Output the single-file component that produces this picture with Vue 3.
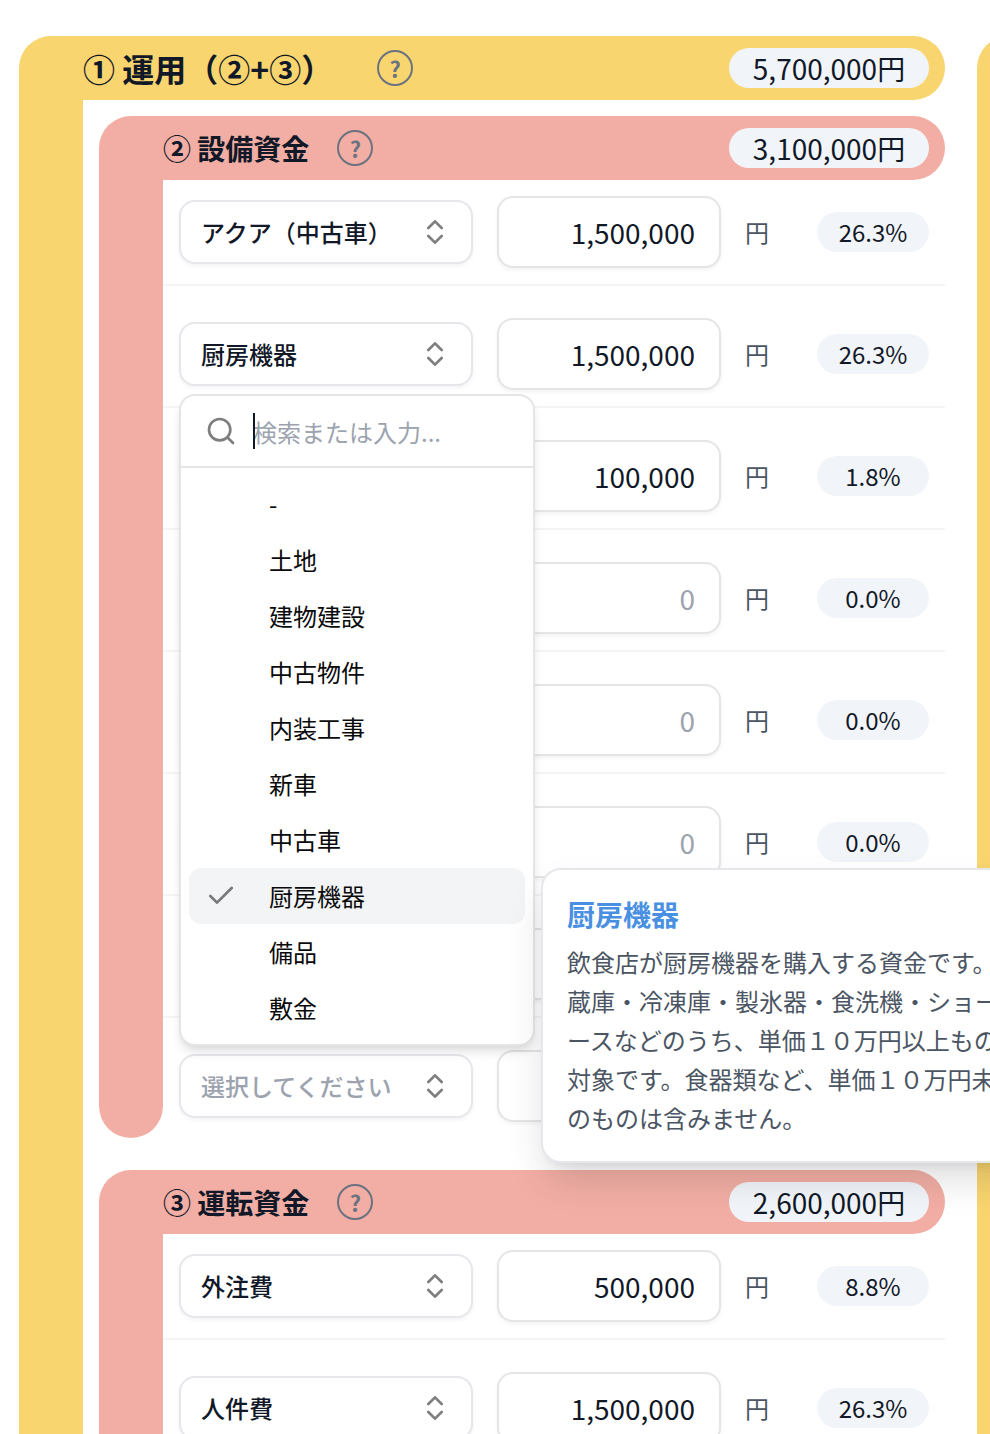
<script setup>
import { reactive, ref } from "vue";

const options = ["-", "土地", "建物建設", "中古物件", "内装工事", "新車", "中古車", "厨房機器", "備品", "敷金"]

const sections = reactive([
  {
    id: "equipment",
    title: "② 設備資金",
    total: "3,100,000円",
    rows: [
      { name: "アクア（中古車）", amount: "1,500,000", rate: "26.3%" },
      { name: "厨房機器", amount: "1,500,000", rate: "26.3%", open: true },
      { name: "備品", amount: "100,000", rate: "1.8%" },
      { name: "", amount: "", rate: "0.0%" },
      { name: "", amount: "", rate: "0.0%" },
      { name: "", amount: "", rate: "0.0%" },
      { name: "", amount: "", rate: "0.0%" },
      { name: "", amount: "", rate: "0.0%" }
    ]
  },
  {
    id: "working",
    title: "③ 運転資金",
    total: "2,600,000円",
    rows: [
      { name: "外注費", amount: "500,000", rate: "8.8%" },
      { name: "人件費", amount: "1,500,000", rate: "26.3%" },
      { name: "", amount: "", rate: "0.0%" }
    ]
  }
])

const search = ref("")

const selectOption = (row, option) => {
  row.name = option
  row.open = false
}
</script>

<template>
  <main class="page">
    <div class="board">
      <section class="card">
        <header class="bar-head">
          <h1>① 運用（②+③）</h1>
          <button type="button" class="help" aria-label="ヘルプ">?</button>
          <span class="total">5,700,000円</span>
        </header>
        <div class="card-body">
          <div class="side"></div>
          <div class="sections">
            <section v-for="section in sections" :key="section.id" class="section">
              <header class="bar-head">
                <h2>{{ section.title }}</h2>
                <button type="button" class="help" aria-label="ヘルプ">?</button>
                <span class="total">{{ section.total }}</span>
              </header>
              <div class="card-body">
                <div class="side"></div>
                <div class="rows">
                  <div v-for="(row, i) in section.rows" :key="i" class="row">
                    <div class="combo">
                      <select v-model="row.name" :class="{ empty: !row.name }" aria-label="項目">
                        <option value="" disabled>選択してください</option>
                        <option v-if="row.name && !options.includes(row.name)">{{ row.name }}</option>
                        <option v-for="o in options" :key="o">{{ o }}</option>
                      </select>
                      <svg class="icon chevrons" viewBox="0 0 24 24"><path d="m7 15 5 5 5-5M7 9l5-5 5 5" /></svg>

                      <div v-if="row.open" class="popover">
                        <div class="search">
                          <svg class="icon" viewBox="0 0 24 24"><circle cx="11" cy="11" r="8" /><path d="m21 21-4.3-4.3" /></svg>
                          <div class="search-box">
                            <input v-model="search" type="text" placeholder="検索または入力..." aria-label="検索または入力">
                          </div>
                        </div>
                        <ul role="listbox">
                          <li
                            v-for="o in options"
                            :key="o"
                            role="option"
                            :aria-selected="o === row.name"
                            :class="{ selected: o === row.name }"
                            @click="selectOption(row, o)"
                          >
                            <span class="check">
                              <svg v-if="o === row.name" class="icon" viewBox="0 0 24 24"><path d="M20 6 9 17l-5-5" /></svg>
                            </span>
                            <span>{{ o }}</span>
                            <div v-if="o === row.name" class="tooltip" role="tooltip">
                              <h3>厨房機器</h3>
                              <p>飲食店が厨房機器を購入する資金です。冷蔵庫・冷凍庫・製氷器・食洗機・ショーケースなどのうち、単価１０万円以上ものが対象です。食器類など、単価１０万円未満のものは含みません。</p>
                            </div>
                          </li>
                        </ul>
                      </div>
                    </div>
                    <input v-model="row.amount" class="amount" type="text" inputmode="numeric" placeholder="0" aria-label="金額">
                    <span class="unit">円</span>
                    <span class="rate">{{ row.rate }}</span>
                  </div>
                </div>
              </div>
            </section>
          </div>
        </div>
      </section>
      <section class="card">
        <header class="bar-head"></header>
        <div class="card-body">
          <div class="side"></div>
        </div>
      </section>
    </div>
  </main>
</template>

<style>
  body {
    margin: 0;
    background: #fff;
  }
</style>

<style scoped>
  * {
    box-sizing: border-box;
  }

  .page {
    height: 100vh;
    overflow: hidden;
    font-family: "Noto Sans CJK JP", "Noto Sans", sans-serif;
    font-size: 24px;
    color: #111827;
  }

  .board {
    padding: 36px 0 36px 19px;
    display: flex;
    gap: 32px;
  }

  button, input, select {
    font-family: inherit;
    color: inherit;
  }

  h1, h2, h3, p, ul {
    margin: 0;
    padding: 0;
  }

  .card {
    --bar: #f8d56f;
    flex: 0 0 calc(100vw - 64px);
    display: flex;
    flex-direction: column;
  }

  .section {
    --bar: #f2aea4;
  }

  .bar-head {
    flex: none;
    height: 64px;
    padding: 0 16px 0 64px;
    display: flex;
    align-items: center;
    gap: 28px;
    background: var(--bar);
    border-radius: 32px 32px 32px 0;
  }

  .card-body {
    flex: 1;
    display: flex;
  }

  .side {
    flex: none;
    width: 64px;
    background: var(--bar);
    border-radius: 0 0 32px 32px;
  }

  .sections {
    flex: 1;
    min-width: 0;
    padding: 16px 0 16px 16px;
    display: flex;
    flex-direction: column;
    gap: 32px;
  }

  h1 {
    margin-right: 16px;
    font-size: 32px;
    line-height: 48px;
    font-weight: 600;
  }

  h2 {
    font-size: 28px;
    line-height: 40px;
    font-weight: 600;
  }

  .help {
    width: 36px;
    height: 36px;
    padding: 0;
    border: 2px solid #6b7280;
    border-radius: 50%;
    background: none;
    color: #6b7280;
    font-size: 22px;
    line-height: 32px;
    font-weight: 700;
  }

  .total {
    margin-left: auto;
    width: 200px;
    height: 40px;
    border-radius: 20px;
    background: #f1f5f9;
    font-size: 28px;
    line-height: 40px;
    text-align: center;
  }

  .rows {
    flex: 1;
    min-width: 0;
    display: flex;
    flex-direction: column;
    gap: 16px;
  }

  .row {
    display: flex;
    align-items: center;
    padding: 16px;
    border-bottom: 2px solid #f3f4f6;
  }

  .row:last-child {
    border-bottom: none;
  }

  .combo {
    position: relative;
    flex: 1;
    margin-right: 24px;
  }

  select {
    display: block;
    width: 100%;
    height: 64px;
    padding: 0 60px 2px 20px;
    appearance: none;
    border: 2px solid #e5e7eb;
    border-radius: 16px;
    background: #fff;
    box-shadow: 0 2px 4px rgba(0, 0, 0, 0.05);
    font-size: 24px;
    font-weight: 500;
  }

  select.empty {
    color: #9ca3af;
  }

  .icon {
    display: block;
    flex: none;
    width: 32px;
    height: 32px;
    fill: none;
    stroke: #000;
    stroke-width: 2;
    stroke-linecap: round;
    stroke-linejoin: round;
    opacity: 0.5;
  }

  .chevrons {
    position: absolute;
    top: 16px;
    right: 22px;
    pointer-events: none;
  }

  .amount {
    width: 224px;
    height: 72px;
    padding: 0 24px;
    border: 2px solid #e5e5e5;
    border-radius: 16px;
    background: #fff;
    box-shadow: 0 2px 4px rgba(0, 0, 0, 0.05);
    font-size: 28px;
    text-align: right;
  }

  .amount::placeholder,
  .search input::placeholder {
    color: #9ca3af;
    opacity: 1;
  }

  .unit {
    width: 72px;
    margin-left: 24px;
    line-height: 40px;
    color: #4b5563;
  }

  .rate {
    width: 112px;
    height: 40px;
    border-radius: 20px;
    background: #f1f5f9;
    line-height: 40px;
    text-align: center;
  }

  .popover {
    position: absolute;
    z-index: 10;
    top: calc(100% + 8px);
    left: 0;
    width: 356px;
    border: 2px solid #e5e5e5;
    border-radius: 16px;
    background: #fff;
    box-shadow: 0 8px 12px -2px rgba(0, 0, 0, 0.1), 0 4px 8px -4px rgba(0, 0, 0, 0.1);
    color: #0a0a0a;
  }

  .search {
    height: 72px;
    padding: 0 24px;
    display: flex;
    align-items: center;
    gap: 16px;
    border-bottom: 2px solid #e5e5e5;
  }

  .search-box {
    position: relative;
    flex: 1;
    min-width: 0;
  }

  /* text cursor of the focused search field */
  .search-box::before {
    content: "";
    position: absolute;
    top: 0;
    left: 0;
    width: 2px;
    height: 100%;
    background: #0f172a;
  }

  .search input {
    display: block;
    width: 100%;
    height: 36px;
    padding: 0;
    border: none;
    outline: none;
    background: none;
    font-size: 24px;
  }

  ul {
    padding: 8px;
    list-style: none;
  }

  li {
    position: relative;
    height: 56px;
    padding: 0 16px;
    display: flex;
    align-items: center;
    gap: 32px;
    border-radius: 12px;
    line-height: 40px;
  }

  li.selected {
    background: #f3f4f6;
  }

  .check {
    width: 32px;
    height: 32px;
  }

  .tooltip {
    position: absolute;
    top: 0;
    left: calc(100% + 16px);
    width: 512px;
    padding: 24px;
    border: 2px solid #e5e7eb;
    border-radius: 20px;
    background: #fff;
    box-shadow: 0 20px 40px -6px rgba(0, 0, 0, 0.15), 0 8px 12px -8px rgba(0, 0, 0, 0.1);
  }

  h3 {
    margin-bottom: 8px;
    font-size: 28px;
    line-height: 40px;
    font-weight: 700;
    color: #4a90e2;
  }

  p {
    line-height: 39px;
    line-break: loose;
    color: #4b5563;
  }
</style>
